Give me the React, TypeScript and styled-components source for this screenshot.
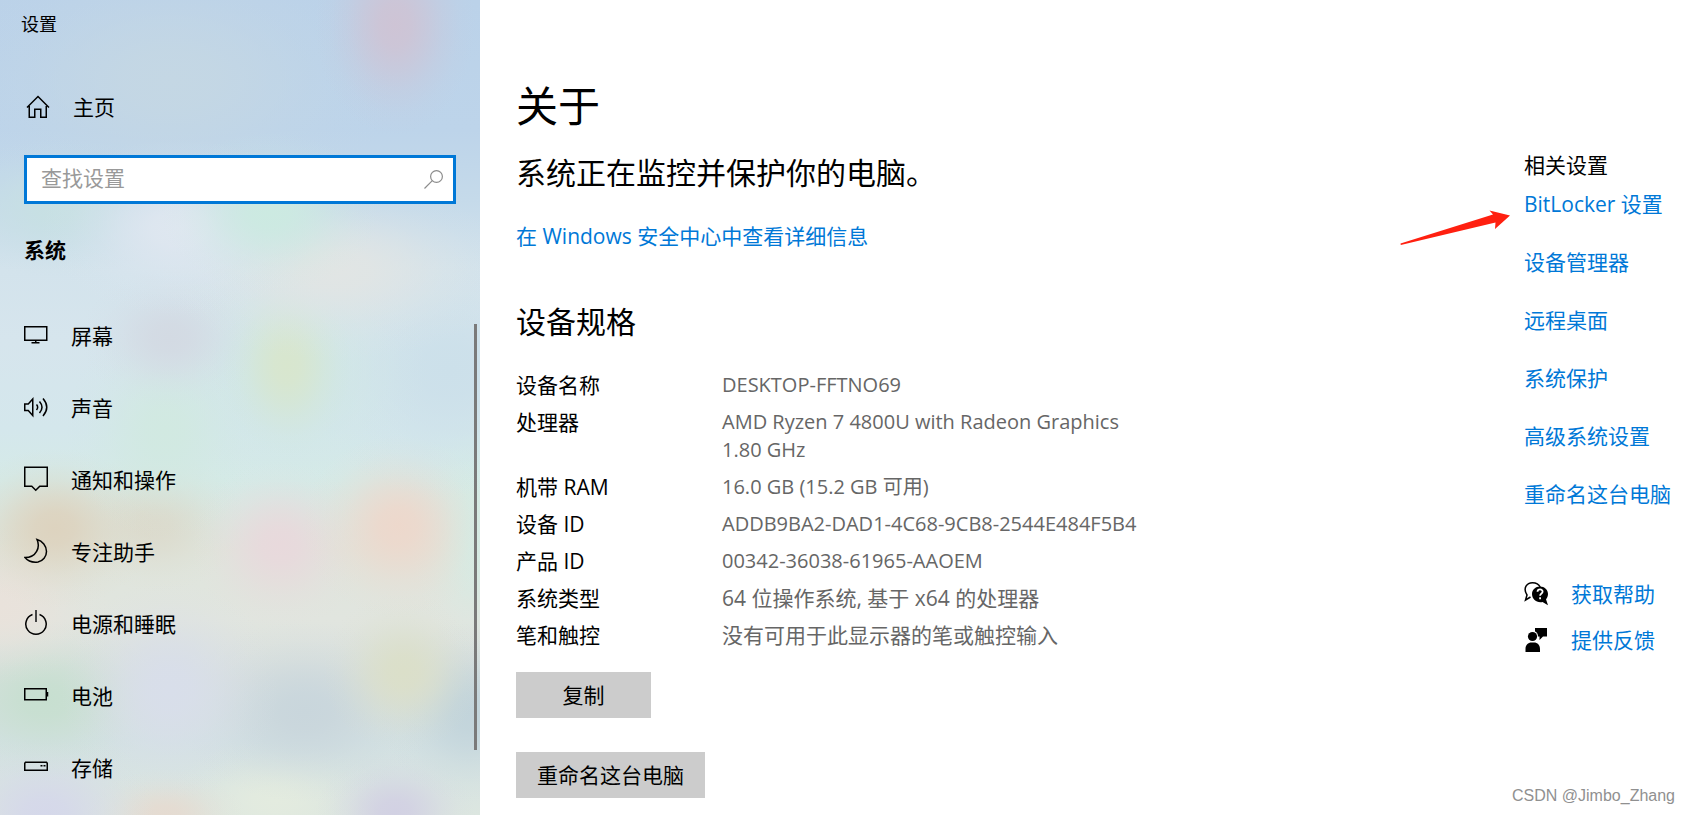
import React from "react";
import styled, { createGlobalStyle } from "styled-components";

const GlobalStyle = createGlobalStyle`
  *, *::before, *::after { box-sizing: border-box; }
  body {
    margin: 0;
    background: #fff;
    color: #000;
    font-family: "Open Sans", "Noto Sans CJK SC", sans-serif;
    font-size: 21px;
    line-height: 28px;
  }
  h1, h2, h3, p, ul { margin: 0; padding: 0; font-weight: 400; }
  ul { list-style: none; }
`;

const ACCENT = "#0078d7";

/* A soft spot of wallpaper colour: radii, centre, rgb */
const spot = (rx: number, ry: number, x: number, y: number, rgb: string) => {
  const stops = [[1, 0], [0.9, 20], [0.62, 40], [0.3, 60], [0.09, 80], [0, 100]];
  const list = stops.map(([a, at]) => `rgb(${rgb} / ${a}) ${at}%`).join(", ");
  return `radial-gradient(ellipse ${rx}px ${ry}px at ${x}px ${y}px, ${list})`;
};

const WALLPAPER = [
  spot(80, 110, 395, 25, "206 196 213"),
  spot(110, 80, 270, 212, "204 234 225"),
  spot(140, 90, 180, 228, "223 231 240"),
  spot(180, 90, 335, 270, "225 229 228"),
  spot(120, 70, 60, 208, "199 224 227"),
  spot(64, 90, 287, 365, "216 230 206"),
  spot(90, 70, 170, 338, "211 218 227"),
  spot(100, 110, 165, 430, "209 233 225"),
  spot(140, 130, 290, 370, "207 231 228"),
  spot(150, 130, 450, 370, "204 224 234"),
  spot(96, 92, 398, 526, "237 216 204"),
  spot(90, 84, 280, 545, "232 217 220"),
  spot(100, 80, 55, 528, "221 211 191"),
  spot(90, 70, 155, 522, "220 218 204"),
  spot(70, 130, 480, 530, "212 236 229"),
  spot(110, 80, 0, 605, "233 226 219"),
  spot(80, 80, 403, 672, "219 223 201"),
  spot(110, 110, 170, 690, "216 222 234"),
  spot(120, 80, 45, 700, "199 223 208"),
  spot(130, 90, 305, 712, "201 214 220"),
  spot(90, 90, 470, 712, "194 212 219"),
  spot(110, 80, 45, 815, "213 216 234"),
  spot(80, 46, 165, 815, "229 219 209"),
  spot(80, 60, 395, 812, "210 209 227"),
  spot(110, 60, 275, 800, "227 235 223"),
  spot(230, 140, 170, 80, "196 215 228"),
  "linear-gradient(#bbd2e9 0, #bdd4ea 130px, #c5daea 200px, #d3e3ec 270px, #d6e5ed 340px, #d4e7ec 430px, #d5eae7 480px, #dfe5dc 550px, #e1e5df 620px, #d9e0de 680px, #d3e1e3 740px, #dce6e0 815px)",
].join(", ");

const Page = styled.div`
  position: relative;
  display: flex;
  min-height: 100vh;
`;

const Sidebar = styled.aside`
  position: relative;
  flex: none;
  width: 480px;
  padding: 10px 24px 0;
  background: ${WALLPAPER};
`;

const WindowTitle = styled.p`
  margin-left: -3px;
  font-size: 18px;
`;

const HomeLink = styled.a`
  display: flex;
  align-items: center;
  gap: 22px;
  margin-top: 55px;
  padding-left: 2px;
  color: inherit;
  text-decoration: none;
`;

const SearchBox = styled.label`
  display: flex;
  align-items: center;
  height: 49px;
  margin-top: 34px;
  padding: 0 10px 0 14px;
  background: #fff;
  border: 3px solid ${ACCENT};
`;

const SearchInput = styled.input`
  flex: 1;
  min-width: 0;
  height: 100%;
  padding: 0 0 4px;
  border: 0;
  outline: 0;
  background: transparent;
  font: inherit;
  &::placeholder { color: #999; opacity: 1; }
`;

const GroupTitle = styled.h2`
  margin-top: 32px;
  font-size: 21px;
  font-weight: 700;
`;

const NavList = styled.ul`
  margin-top: 36px;
`;

const Icon = styled.svg`
  flex: none;
  width: 25px;
  height: 26px;
  fill: none;
  stroke: #000;
  stroke-width: 1.5;
`;

const NavLink = styled.a`
  display: flex;
  align-items: center;
  gap: 22px;
  height: 72px;
  color: inherit;
  text-decoration: none;

  ${Icon} { margin-bottom: 2px; }
`;

const ScrollThumb = styled.div`
  position: absolute;
  top: 324px;
  right: 3px;
  bottom: 65px;
  width: 3px;
  background: #7a7a7a;
`;

const Content = styled.main`
  flex: 1;
  min-width: 0;
  padding: 76px 36px 16px;
`;

const PageTitle = styled.h1`
  font-size: 42px;
  line-height: 60px;
`;

const SectionTitle = styled.h2<{ $space: number }>`
  margin-top: ${(p) => p.$space}px;
  font-size: 30px;
  line-height: 40px;
`;

const TextLink = styled.a`
  color: ${ACCENT};
  text-decoration: none;
  white-space: nowrap;
`;

const SecurityLine = styled.p`
  margin-top: 29px;
`;

const SpecTable = styled.table`
  margin-top: 25px;
  border-collapse: collapse;
`;

const SpecName = styled.th`
  width: 206px;
  padding: 4px 0 5px;
  font-weight: 400;
  text-align: left;
  vertical-align: top;
`;

const SpecValue = styled.td<{ $latin?: boolean }>`
  max-width: 430px;
  padding: 4px 0 5px;
  color: #666;
  font-size: ${(p) => (p.$latin ? 20 : 21)}px;
  vertical-align: top;
`;

const Actions = styled.div`
  display: flex;
  flex-direction: column;
  align-items: flex-start;
  gap: 34px;
  margin-top: 18px;
`;

const Button = styled.button`
  min-width: 135px;
  height: 46px;
  padding: 0 21px;
  border: 0;
  background: #ccc;
  color: #000;
  font: inherit;
`;

const Related = styled.aside`
  flex: none;
  width: 166px;
  padding-top: 151px;
`;

const RelatedTitle = styled.h3`
  font-size: 21px;
`;

const RelatedList = styled.ul`
  display: flex;
  flex-direction: column;
  gap: 30px;
  margin-top: 11px;
`;

const SupportList = styled.ul`
  display: flex;
  flex-direction: column;
  gap: 18px;
  margin-top: 72px;
`;

const SupportItem = styled.li`
  display: flex;
  align-items: center;
  gap: 22px;
`;

const BitLockerItem = styled.li`
  position: relative;
`;

const Arrow = styled.svg`
  position: absolute;
  top: 18px;
  right: 100%;
  width: 110px;
  height: 38px;
  margin-right: 14px;
`;

const Watermark = styled.p`
  position: absolute;
  right: 15px;
  bottom: 5px;
  color: #909090;
  font: 16px/28px "Liberation Sans", sans-serif;
`;

const NAV = [
  { label: "屏幕", art: <><path d="M.75 4.75h22v13.5h-22zM11.75 18v3" /><path d="M7.5 20.75h8" /></> },
  { label: "声音", art: <path d="M.75 10v6.500h3.500l4.500 5V5l-4.500 5zM12.500 10.500q2.300 2.700 0 5.500M15.500 7.500q5 5.700 0 11.500M19 4.500q7.500 8.700 0 17.500" /> },
  { label: "通知和操作", art: <path d="M.75 1.250h22.500v19h-7.500l-4 4-4-4h-7z" /> },
  { label: "专注助手", art: <path d="M13 1.500c3.500 7.500-.5 18-12 18 4 5 9 5 13 4.500 5-1 8.500-5.500 8.500-10.500 0-5.500-4-10.500-9.500-12z" /> },
  { label: "电源和睡眠", art: <><path d="M8.500 4.500a10.200 10.200 0 1 0 7 0" /><path d="M12 0v12" strokeWidth="2" stroke="#444" /></> },
  { label: "电池", art: <><path d="M.75 6.750h21.500v11h-21.500z" /><path d="M23.250 10v4.500" strokeWidth="2" /></> },
  { label: "存储", art: <><path d="M1.500 8.250h21l.75 1v7H.75v-7z" /><path d="M16.500 11.750h2M19.500 11.750h2" /></> },
];

const SPECS: { name: string; value: string; latin?: boolean }[] = [
  { name: "设备名称", value: "DESKTOP-FFTNO69", latin: true },
  { name: "处理器", value: "AMD Ryzen 7 4800U with Radeon Graphics 1.80 GHz", latin: true },
  { name: "机带 RAM", value: "16.0 GB (15.2 GB 可用)", latin: true },
  { name: "设备 ID", value: "ADDB9BA2-DAD1-4C68-9CB8-2544E484F5B4", latin: true },
  { name: "产品 ID", value: "00342-36038-61965-AAOEM", latin: true },
  { name: "系统类型", value: "64 位操作系统, 基于 x64 的处理器" },
  { name: "笔和触控", value: "没有可用于此显示器的笔或触控输入" },
];

const RELATED = ["设备管理器", "远程桌面", "系统保护", "高级系统设置", "重命名这台电脑"];

export default function App() {
  return (
    <Page>
      <GlobalStyle />
      <Sidebar>
        <WindowTitle>设置</WindowTitle>
        <HomeLink href="#home">
          <Icon viewBox="0 0 25 26" aria-hidden="true">
            <path d="M1 13.500 12 2.500l11 11M3.250 12v11.250h5.500v-8h6v8h5.500V12" />
          </Icon>
          主页
        </HomeLink>
        <SearchBox>
          <SearchInput type="text" placeholder="查找设置" aria-label="查找设置" />
          <svg width="19" height="19" viewBox="0 0 19 19" fill="none" stroke="#8c8c8c" strokeWidth="1.2" aria-hidden="true">
            <circle cx="12.500" cy="6.500" r="5.900" />
            <path d="M8.300 10.700.5 18.500" />
          </svg>
        </SearchBox>
        <GroupTitle>系统</GroupTitle>
        <NavList>
          {NAV.map((n) => (
            <li key={n.label}>
              <NavLink href="#">
                <Icon viewBox="0 0 25 26" aria-hidden="true">{n.art}</Icon>
                {n.label}
              </NavLink>
            </li>
          ))}
        </NavList>
        <ScrollThumb />
      </Sidebar>

      <Content>
        <PageTitle>关于</PageTitle>
        <SectionTitle $space={17}>系统正在监控并保护你的电脑。</SectionTitle>
        <SecurityLine>
          <TextLink href="#security">在 Windows 安全中心中查看详细信息</TextLink>
        </SecurityLine>
        <SectionTitle $space={52}>设备规格</SectionTitle>
        <SpecTable>
          <tbody>
            {SPECS.map((s) => (
              <tr key={s.name}>
                <SpecName scope="row">{s.name}</SpecName>
                <SpecValue $latin={s.latin}>{s.value}</SpecValue>
              </tr>
            ))}
          </tbody>
        </SpecTable>
        <Actions>
          <Button type="button">复制</Button>
          <Button type="button">重命名这台电脑</Button>
        </Actions>
      </Content>

      <Related>
        <RelatedTitle>相关设置</RelatedTitle>
        <RelatedList>
          <BitLockerItem>
            <TextLink href="#bitlocker">BitLocker 设置</TextLink>
            <Arrow viewBox="0 0 110 38" aria-hidden="true">
              <path d="M.5 35.500 93 6.500 89.500 2.500 110 7.500 95 21l.5-6.500L.8 37z" fill="#ff2010" />
            </Arrow>
          </BitLockerItem>
          {RELATED.map((r) => (
            <li key={r}><TextLink href="#">{r}</TextLink></li>
          ))}
        </RelatedList>
        <SupportList>
          <SupportItem>
            <Icon viewBox="0 0 25 26" aria-hidden="true">
              <path d="M6.500 16 1.500 19l1.500-5C-1.500 7 3 1.700 8.500 1.700c4 0 6.500 1.800 7.700 4.300" />
              <path d="M16 5.500c4.500 0 8 3.300 8 7.500 0 2.300-.9 4-2 5.300l2 6-5.500-3.200c-6 1.200-10.500-3-10.500-8 0-4.300 3.500-7.600 8-7.600z" fill="#000" stroke="none" />
              <path d="M13.500 10.800c.2-3.200 5.300-3 5.100 0-.1 1.700-2.500 1.700-2.500 4M16.100 16.200v2" stroke="#fff" strokeWidth="1.800" />
            </Icon>
            <TextLink href="#help">获取帮助</TextLink>
          </SupportItem>
          <SupportItem>
            <Icon viewBox="0 0 25 26" aria-hidden="true">
              <g fill="#000" stroke="none">
                <circle cx="8.500" cy="9.500" r="4.600" />
                <path d="M1.500 25v-3c0-4 2.500-6.500 6-6.500h2.500c3.500 0 6 2.500 6 6.500v3zM11 1h12v8.500h-4L15.500 13V9.500H14C14 6.500 12.500 5 11 4.500z" />
              </g>
            </Icon>
            <TextLink href="#feedback">提供反馈</TextLink>
          </SupportItem>
        </SupportList>
      </Related>
      <Watermark>CSDN @Jimbo_Zhang</Watermark>
    </Page>
  );
}
